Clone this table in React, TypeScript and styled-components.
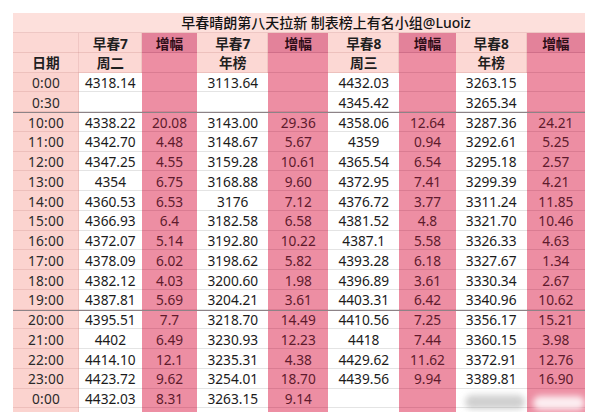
import React from 'react'
import styled, { createGlobalStyle, css } from 'styled-components'

type Kind = 'title' | 'head' | 'gainHead' | 'gain' | 'date' | 'value'

const GlobalStyle = createGlobalStyle`
  html, body {
    margin: 0;
    padding: 0;
    background: #fff;
  }
  body {
    font-family: "Noto Sans", "Noto Sans CJK SC", sans-serif;
  }
`

const bg: Record<Kind, string> = {
  title: '#fde0dc',
  head: '#fcd8d4',
  gainHead: '#e3829a',
  gain: '#ed8ea3',
  date: '#fbd3cf',
  value: '#ffffff',
}

const ink: Record<Kind, string> = {
  title: '#141414',
  head: '#1f1f1f',
  gainHead: '#2e0d17',
  gain: '#5e1a2c',
  date: '#2a2a2a',
  value: '#1b1b1b',
}

const rule: Record<Kind, string> = {
  title: 'rgba(170, 90, 90, 0.18)',
  head: 'rgba(170, 90, 90, 0.18)',
  gainHead: 'rgba(120, 30, 60, 0.18)',
  gain: 'rgba(120, 30, 60, 0.16)',
  date: 'rgba(170, 90, 90, 0.16)',
  value: '#e4e4e4',
}

const Page = styled.div`
  padding: 13px 15px 0 13px;
  height: 412px;
  overflow: hidden;
  box-sizing: border-box;
`

const Sheet = styled.div`
  position: relative;
  display: grid;
  grid-template-columns: 66px 62.7px 55.6px 71px 60px 71px 56.4px 71px 58.3px;
  grid-template-rows: 20px;
  grid-auto-rows: 19.75px;
  width: 572px;
`

const Title = styled.div`
  grid-column: 1 / -1;
  background: ${bg.title};
  color: ${ink.title};
  font-size: 14px;
  font-weight: 500;
  line-height: 20px;
  text-align: center;
  padding-left: 54px;
  white-space: nowrap;
  box-shadow: inset 0 -1px 0 ${rule.title};
`

const Cell = styled.div<{ $kind: Kind; $strong?: boolean }>`
  display: flex;
  align-items: center;
  justify-content: center;
  font-size: 13.7px;
  line-height: 1;
  padding-top: 1px;
  box-sizing: border-box;
  white-space: nowrap;
  background: ${(p) => bg[p.$kind]};
  color: ${(p) => ink[p.$kind]};
  font-weight: ${(p) => (p.$kind === 'head' || p.$kind === 'gainHead' ? 700 : 400)};
  box-shadow: ${(p) =>
    [
      `inset 0 -1px 0 ${rule[p.$kind]}`,
      p.$kind === 'head' || p.$kind === 'date' ? 'inset -1px 0 0 rgba(170, 90, 90, 0.14)' : '',
      p.$strong ? 'inset 0 1px 0 #8d8387' : '',
    ]
      .filter(Boolean)
      .join(', ')};
  ${(p) =>
    p.$kind === 'date' &&
    css`
      letter-spacing: 0.2px;
    `}
`

const Smudge = styled.div<{ $tone: string }>`
  position: absolute;
  height: 14px;
  border-radius: 8px;
  background: ${(p) => p.$tone};
  filter: blur(3px);
`

const heads = ['早春7', '早春7', '早春8', '早春8']
const subs = ['周二', '年榜', '周三', '年榜']

const rows: [string, string[], boolean?][] = [
  ['0:00', ['4318.14', '', '3113.64', '', '4432.03', '', '3263.15', '']],
  ['0:30', ['', '', '', '', '4345.42', '', '3265.34', '']],
  ['10:00', ['4338.22', '20.08', '3143.00', '29.36', '4358.06', '12.64', '3287.36', '24.21'], true],
  ['11:00', ['4342.70', '4.48', '3148.67', '5.67', '4359', '0.94', '3292.61', '5.25']],
  ['12:00', ['4347.25', '4.55', '3159.28', '10.61', '4365.54', '6.54', '3295.18', '2.57']],
  ['13:00', ['4354', '6.75', '3168.88', '9.60', '4372.95', '7.41', '3299.39', '4.21']],
  ['14:00', ['4360.53', '6.53', '3176', '7.12', '4376.72', '3.77', '3311.24', '11.85']],
  ['15:00', ['4366.93', '6.4', '3182.58', '6.58', '4381.52', '4.8', '3321.70', '10.46']],
  ['16:00', ['4372.07', '5.14', '3192.80', '10.22', '4387.1', '5.58', '3326.33', '4.63']],
  ['17:00', ['4378.09', '6.02', '3198.62', '5.82', '4393.28', '6.18', '3327.67', '1.34']],
  ['18:00', ['4382.12', '4.03', '3200.60', '1.98', '4396.89', '3.61', '3330.34', '2.67']],
  ['19:00', ['4387.81', '5.69', '3204.21', '3.61', '4403.31', '6.42', '3340.96', '10.62']],
  ['20:00', ['4395.51', '7.7', '3218.70', '14.49', '4410.56', '7.25', '3356.17', '15.21'], true],
  ['21:00', ['4402', '6.49', '3230.93', '12.23', '4418', '7.44', '3360.15', '3.98']],
  ['22:00', ['4414.10', '12.1', '3235.31', '4.38', '4429.62', '11.62', '3372.91', '12.76']],
  ['23:00', ['4423.72', '9.62', '3254.01', '18.70', '4439.56', '9.94', '3389.81', '16.90']],
  ['0:00', ['4432.03', '8.31', '3263.15', '9.14', '', '', '', '']],
  ['', ['', '', '', '', '', '', '', '']],
]

const App = () => {
  return (
    <Page>
      <GlobalStyle />
      <Sheet>
        <Title>早春晴朗第八天拉新 制表榜上有名小组@Luoiz</Title>

        <Cell $kind="head" />
        {heads.map((h, i) => (
          <React.Fragment key={'h' + i}>
            <Cell $kind="head">{h}</Cell>
            <Cell $kind="gainHead">增幅</Cell>
          </React.Fragment>
        ))}

        <Cell $kind="head">日期</Cell>
        {subs.map((s, i) => (
          <React.Fragment key={'s' + i}>
            <Cell $kind="head">{s}</Cell>
            <Cell $kind="gain" />
          </React.Fragment>
        ))}

        {rows.map(([time, values, strong], r) => (
          <React.Fragment key={'r' + r}>
            <Cell $kind="date" $strong={strong}>{time}</Cell>
            {values.map((v, c) => (
              <Cell key={c} $kind={c % 2 === 0 ? 'value' : 'gain'} $strong={strong}>
                {v}
              </Cell>
            ))}
          </React.Fragment>
        ))}

        <Smudge $tone="rgba(150, 150, 150, 0.45)" style={{ left: 452, top: 382, width: 60 }} />
        <Smudge $tone="rgba(255, 255, 255, 0.85)" style={{ left: 520, top: 383, width: 52 }} />
      </Sheet>
    </Page>
  )
}

export default App
